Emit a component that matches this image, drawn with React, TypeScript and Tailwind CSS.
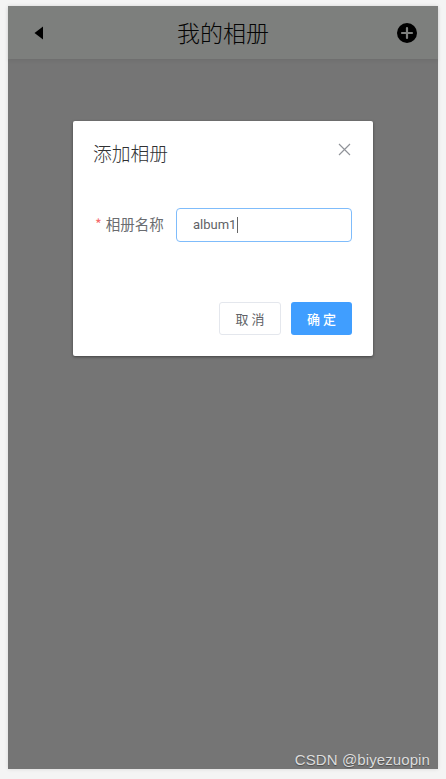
export default function App() {
  const cjk = "font-['Noto_Sans_CJK_SC','Roboto',sans-serif]";
  return (
    <div className={`w-[446px] h-[779px] bg-[#f4f4f4] pt-[6px] px-[8px] pb-[10px] relative overflow-hidden ${cjk}`}>
      <div className="relative h-full bg-[#757575] shadow-[0_0_4px_rgba(0,0,0,0.12)]">
        <header className="h-[53px] bg-[#7d7f7d] flex items-center justify-between pl-[21px] pr-[21px] shadow-[0_2px_4px_rgba(0,0,0,0.06)]">
          <div className="w-[20px] pl-[4px] flex">
            <svg width="11" height="16" viewBox="0 0 11 16" aria-hidden="true">
              <path d="M10 1.5V14.5L1.5 8Z" fill="#000" />
            </svg>
          </div>
          <h1 className="text-[23px] leading-[30px] -mt-[1px] font-light text-[#050505]">我的相册</h1>
          <svg width="20" height="20" viewBox="0 0 20 20" aria-hidden="true">
            <circle cx="10" cy="10" r="10" fill="#000" />
            <path d="M10 5v10M5 10h10" stroke="#7d7f7d" strokeWidth="2.2" strokeLinecap="round" />
          </svg>
        </header>
        <div className="absolute inset-0 flex justify-center items-start pt-[115px]">
          <div className="w-[300px] h-[235px] bg-white rounded-[2px] shadow-[0_1px_3px_rgba(0,0,0,0.45)] flex flex-col pt-[20px] pl-[20px] pr-[21px] pb-[21px]">
            <div className="flex items-start justify-between">
              <span className="text-[18.8px] leading-[26px] -mt-[1px] font-light text-[#303133]">添加相册</span>
              <svg className="mt-[2px] mr-[1px]" width="13" height="13" viewBox="0 0 13 13" aria-hidden="true">
                <path d="M1 1l11 11M12 1L1 12" stroke="#909399" strokeWidth="1.15" />
              </svg>
            </div>
            <div className="flex items-center mt-[42px]">
              <label className="w-[83px] pl-[2px] pb-[2px] text-[14.5px] text-[#6a6c70] whitespace-nowrap">
                <span className="text-[#f56c6c] mr-[4px]">*</span>相册名称
              </label>
              <div className="w-[176px] h-[34px] rounded-[4px] border border-[#7fbcfb] flex items-center pl-[16px] text-[13px] text-[#606266] font-['Roboto',sans-serif]">
                album1<span className="inline-block ml-px w-px h-[16px] bg-[#666]" />
              </div>
            </div>
            <div className="mt-auto flex justify-end gap-[10px]">
              <button className="w-[62px] h-[33px] pl-[3px] rounded-[3px] border border-[#e4e7ed] bg-white text-[13px] tracking-[3px] text-[#606266]">取消</button>
              <button className="w-[61px] h-[33px] pl-[3px] rounded-[3px] bg-[#409eff] text-[13px] tracking-[3px] font-medium text-white">确定</button>
            </div>
          </div>
        </div>
      </div>
      <span className="absolute right-[16px] bottom-[10px] text-[15px] tracking-[0.1px] leading-[18px] text-[#dcdcdc] font-['Liberation_Sans',sans-serif] [text-shadow:0_1px_1px_rgba(0,0,0,0.35)]">CSDN @biyezuopin</span>
    </div>
  );
}
